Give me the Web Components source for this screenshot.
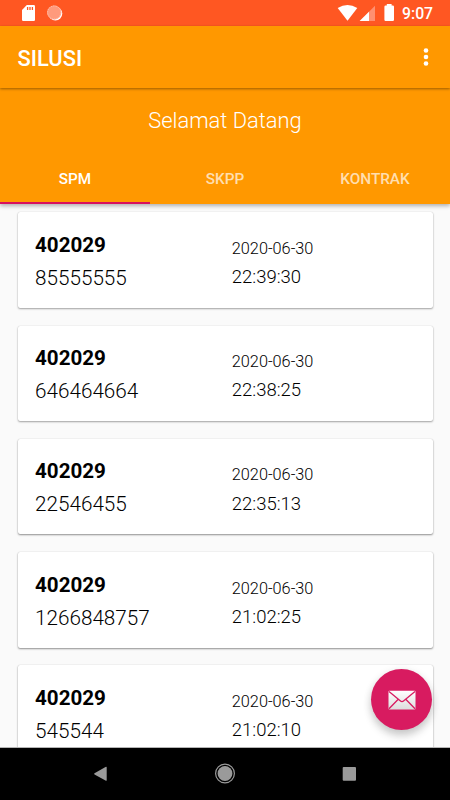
<!DOCTYPE html>
<html lang="id">
<head>
<meta charset="utf-8">
<title>SILUSI</title>
<style>
html,body{margin:0;height:100%;overflow:hidden}
body{font-family:Roboto,"Liberation Sans",sans-serif;background:#fafafa}
</style>
</head>
<body>
<silusi-app></silusi-app>
<script>
const define = (name, html, init) => {
  const t = document.createElement('template');
  t.innerHTML = html;
  customElements.define(name, class extends HTMLElement {
    constructor() {
      super();
      this.attachShadow({mode: 'open'}).append(t.content.cloneNode(true));
    }
    connectedCallback() { if (init) init(this, this.shadowRoot); }
  });
};

define('status-bar', `
<style>
:host{display:flex;height:26px;background:#ff5722;color:#fff;box-sizing:border-box}
svg{display:block;flex:none}
.gap{flex:1}
span{font-size:15.800px;font-weight:500;line-height:28px;width:48px}
</style>
<svg width="70" height="26" viewBox="0 0 70 26">
  <path d="M26.800 5H33.800Q35 5 35 6.200V19.800Q35 21 33.800 21H23.200Q22 21 22 19.800V10Z" fill="#fff"/>
  <path d="M27.600 7v3M30 7v3M32.400 7v3" stroke="#ff5722" stroke-width="1.300"/>
  <circle cx="55.400" cy="13.600" r="6.900" fill="#fff"/>
  <circle cx="54.200" cy="12.500" r="7.100" fill="#ff9a7c"/>
  <circle cx="54.200" cy="12.500" r="6.600" fill="none" stroke="#ffc4b2" stroke-width="1" stroke-dasharray="1.300 1"/>
</svg>
<div class="gap"></div>
<svg width="65" height="26" viewBox="337 0 65 26">
  <path d="M337.700 7.900Q347.500 2 357.300 7.900L347.500 20.700Z" fill="#fff"/>
  <path d="M375 5.700V21H359.700Z" fill="#ff9070"/>
  <path d="M369 11.700V21H359.700Z" fill="#fff"/>
  <path d="M386.800 4h4.800v1.500h1.200q1.200 0 1.200 1.200v13.100q0 1.200-1.200 1.200h-7.200q-1.200 0-1.200-1.200V6.700q0-1.200 1.200-1.200h1.200z" fill="#fff"/>
</svg>
<span>9:07</span>`);

define('app-bar', `
<style>
:host{display:flex;align-items:center;justify-content:space-between;height:61.500px;padding:0 21px 0 17.500px;box-sizing:border-box;background:#ff9800;color:#fff;box-shadow:0 1px 2.500px rgba(0,0,0,.4);position:relative;z-index:2}
h1{margin:4px 0 0;font-size:21.900px;font-weight:500;line-height:26px}
svg{display:block}
</style>
<h1><slot></slot></h1>
<svg width="6" height="20" viewBox="0 0 6 20" fill="#fff"><circle cx="3" cy="3.500" r="2.300"/><circle cx="3" cy="10" r="2.300"/><circle cx="3" cy="16.500" r="2.300"/></svg>`);

define('tab-item', `
<style>
:host{display:flex;flex:1;align-items:center;justify-content:center;height:51px;padding-top:2px;box-sizing:border-box;font-size:15.300px;font-weight:500;color:rgba(255,255,255,.7);border-bottom:2px solid transparent}
:host([selected]){color:#fff;border-bottom-color:#d8105c}
</style>
<slot></slot>`);

define('welcome-header', `
<style>
:host{display:block;height:116.500px;background:#ff9800;color:#fff;box-shadow:0 2px 4px rgba(0,0,0,.3);position:relative}
p{margin:0;height:65.500px;line-height:66px;text-align:center;font-size:21.900px;font-weight:300}
nav{display:flex}
</style>
<p><slot></slot></p>
<nav><slot name="tab"></slot></nav>`);

define('record-card', `
<style>
:host{display:grid;grid-template-columns:196.800px 1fr;height:95.700px;padding:16.600px 17.500px;box-sizing:border-box;background:#fff;border-radius:2px;box-shadow:0 1px 2px rgba(0,0,0,var(--shade,.34)),0 0 1px rgba(0,0,0,.2);color:#000;font-weight:300;flex:none}
div{white-space:nowrap}
.code{font-size:20.600px;font-weight:700;line-height:33px}
.num{font-size:20.700px;line-height:32px}
.date{font-size:16.300px;line-height:39px;height:36.200px}
.time{font-size:18.500px;line-height:24px}
</style>
<section><div class="code"></div><div class="num"></div></section>
<section><div class="date"></div><div class="time"></div></section>`,
(el, root) => {
  for (const k of ['code', 'num', 'date', 'time'])
    root.querySelector('.' + k).textContent = el.getAttribute(k);
});

define('mail-fab', `
<style>
:host{position:absolute;right:18px;bottom:17.800px;width:61px;height:61px;border-radius:50%;background:#d81b60;box-shadow:0 6px 8px rgba(0,0,0,.16),0 2px 8px rgba(0,0,0,.1);display:grid;place-items:center}
svg{display:block}
</style>
<svg width="28" height="20" viewBox="0 0 28 20">
  <defs><linearGradient id="g" x2="0" y2="1"><stop stop-color="#fff"/><stop offset="1" stop-color="#ddd"/></linearGradient></defs>
  <rect x=".500" y=".700" width="27" height="18.800" rx="1" fill="url(#g)"/>
  <path d="M1 1.500L12.200 10.800Q14 12.300 15.800 10.800L27 1.500M1 18.800L10 9.500M27 18.800L18 9.500" fill="none" stroke="#d81b60" stroke-width="1.300"/>
</svg>`);

define('nav-bar', `
<style>
:host{display:flex;justify-content:space-between;align-items:center;height:52px;padding:0 93px;box-sizing:border-box;background:#000}
svg{display:block;width:100%;height:22px}
</style>
<svg viewBox="93 763 264 22" fill="#9a9a9a">
  <path d="M105.500 767Q106.700 766.300 106.700 767.500V780Q106.700 781.300 105.500 780.600L94.500 774.400Q93.700 773.800 94.500 773.200Z"/>
  <circle cx="225" cy="773.500" r="7.400"/><circle cx="225" cy="773.500" r="9.400" fill="none" stroke="#9a9a9a" stroke-width="1.200"/>
  <rect x="342.700" y="767" width="13.300" height="13.800" rx="1"/>
</svg>`);

define('silusi-app', `
<style>
:host{display:flex;flex-direction:column;width:450px;height:800px;background:#fafafa;overflow:hidden}
main{flex:1;min-height:0;position:relative;display:flex;flex-direction:column;overflow:hidden}
.list{display:flex;flex-direction:column;gap:17.500px;padding:8.400px 17.500px 0;flex:1;min-height:0;overflow:hidden;border-bottom:1px solid #b4b4b4}
record-card:nth-child(n+3){--shade:.42}
welcome-header{z-index:1}
</style>
<status-bar></status-bar>
<app-bar>SILUSI</app-bar>
<main>
  <welcome-header>Selamat Datang
    <tab-item slot="tab" selected>SPM</tab-item>
    <tab-item slot="tab">SKPP</tab-item>
    <tab-item slot="tab">KONTRAK</tab-item>
  </welcome-header>
  <div class="list">
    <record-card code="402029" num="85555555" date="2020-06-30" time="22:39:30"></record-card>
    <record-card code="402029" num="646464664" date="2020-06-30" time="22:38:25"></record-card>
    <record-card code="402029" num="22546455" date="2020-06-30" time="22:35:13"></record-card>
    <record-card code="402029" num="1266848757" date="2020-06-30" time="21:02:25"></record-card>
    <record-card code="402029" num="545544" date="2020-06-30" time="21:02:10"></record-card>
  </div>
  <mail-fab></mail-fab>
</main>
<nav-bar></nav-bar>`);
</script>
</body>
</html>
